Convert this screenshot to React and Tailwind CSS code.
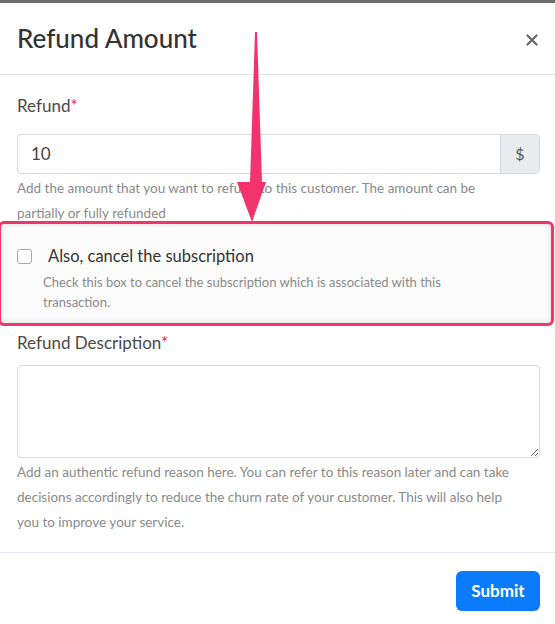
export default function App() {
  return (
    <div className="relative w-[555px] h-[624px] overflow-hidden bg-white font-['Lato','Open_Sans',sans-serif]">
      <div className="h-[3px] bg-[#6b6b6b]" />

      {/* Header */}
      <div className="h-[72px] flex items-center justify-between pl-[17px] pr-[17px] border-b border-[#e4e7ee]">
        <h2 className="text-[26px] text-[#333] font-medium">Refund Amount</h2>
        <svg width="12" height="12" viewBox="0 0 12 12" className="mt-[2px]">
          <path d="M1.5 1.5 L10.5 10.5 M10.5 1.5 L1.5 10.5" stroke="#6b6b6b" strokeWidth="2.4" strokeLinecap="round" />
        </svg>
      </div>

      {/* Body */}
      <div className="px-[17px] pt-[19px] pb-[17px]">
        <label className="block text-[17px] leading-[24px] text-[#4a4a4a]">
          Refund<span className="text-[#d9303e]">*</span>
        </label>
        <div className="mt-[16px] flex h-[40px] w-[523px] rounded border border-[#d6d9de]">
          <input
            defaultValue="10"
            className="flex-1 px-[13px] text-[17px] text-[#444] outline-none bg-transparent"
          />
          <span className="w-[39px] flex items-center justify-center bg-[#e9ecef] border-l border-[#d6d9de] rounded-r text-[16px] text-[#555]">
            $
          </span>
        </div>
        <p className="mt-[2px] w-[495px] text-[13.5px] leading-[25px] text-[#8a8a8a]">
          Add the amount that you want to refund to this customer. The amount can be partially or fully refunded
        </p>

        {/* Highlighted option */}
        <div className="relative -mt-[5px] -mx-[19px] w-[556px] rounded-md border-[3px] border-[#f0346c] bg-[#fbfbfb] shadow-[inset_0_0_6px_rgba(0,0,0,0.12)] pt-[21px] pb-[11px] pl-[16px] pr-[10px]">
          <div className="flex items-center">
            <span className="w-[15px] h-[15px] rounded-[3px] border border-[#a8a8a8] bg-white" />
            <span className="ml-[16px] text-[16.5px] leading-[22px] text-[#333]">Also, cancel the subscription</span>
          </div>
          <p className="mt-[5px] pl-[26px] w-[486px] text-[13px] leading-[20px] text-[#8a8a8a]">
            Check this box to cancel the subscription which is associated with this transaction.
          </p>
        </div>

        <label className="mt-[5px] block text-[17px] leading-[24px] text-[#4a4a4a]">
          Refund Description<span className="text-[#d9303e]">*</span>
        </label>
        <textarea className="mt-[10px] block w-[523px] h-[93px] rounded border border-[#d6d9de] outline-none" />
        <p className="mt-[2px] w-[495px] text-[13.5px] leading-[25px] text-[#8a8a8a]">
          Add an authentic refund reason here. You can refer to this reason later and can take decisions accordingly to
          reduce the churn rate of your customer. This will also help you to improve your service.
        </p>
      </div>

      {/* Footer */}
      <div className="border-t border-[#e4e7ee] flex justify-end pt-[18px] pr-[15px]">
        <button className="h-[40px] w-[84px] rounded-md bg-[#0a7cfb] text-white text-[17px] font-bold">Submit</button>
      </div>

      {/* Annotation arrow */}
      <svg className="absolute left-[230px] top-[30px]" width="45" height="196" viewBox="0 0 45 196">
        <path d="M25 2 L27 2 L32 153 L20 153 Z" fill="#f2336d" />
        <path d="M7 152 L36 152 L22 192 Z" fill="#f2336d" />
      </svg>
    </div>
  )
}
